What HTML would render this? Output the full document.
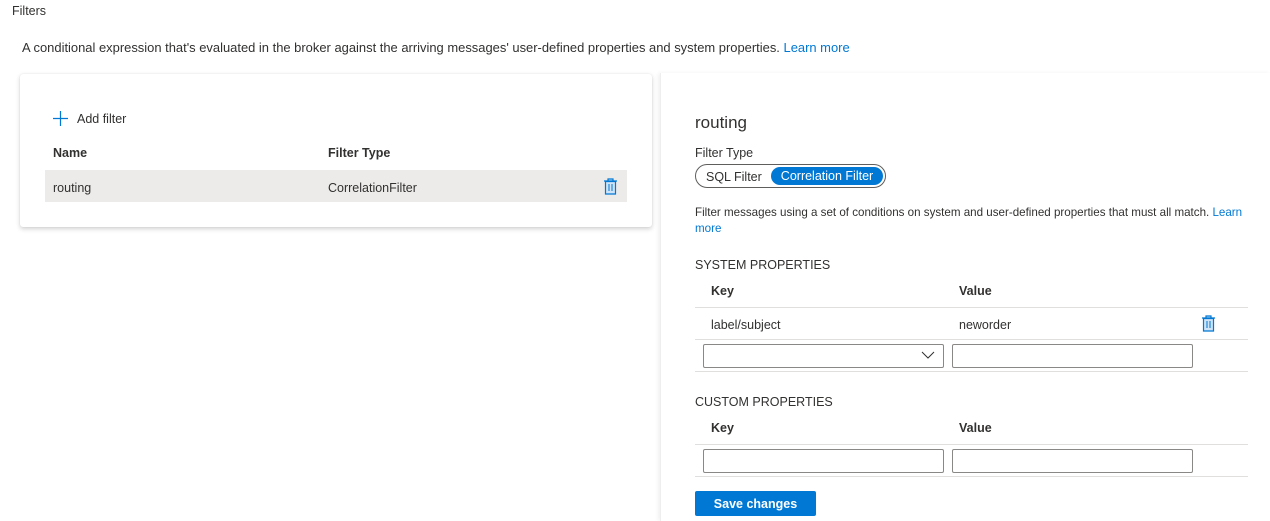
<!DOCTYPE html>
<html><head><style>
*{box-sizing:border-box;margin:0;padding:0}
body{width:1270px;height:521px;overflow:hidden;background:#fff;font-family:"Liberation Sans",sans-serif;font-size:12.5px;color:#323130;position:relative}
.a{position:absolute;white-space:nowrap}
.b{font-weight:bold}
.link{color:#0078d4}
.line{position:absolute;height:1px;background:#e1dfdd}
.inp{position:absolute;border:1px solid #8a8886;border-radius:2px;background:#fff;height:24px}
</style></head><body>
<div class="a" style="left:12px;top:4px">Filters</div>
<div class="a" style="left:22px;top:40px;font-size:12.95px">A conditional expression that's evaluated in the broker against the arriving messages' user-defined properties and system properties. <span class="link">Learn more</span></div>

<div class="a" style="left:20px;top:74px;width:632px;height:153px;background:#fff;border-radius:3px;box-shadow:0 1.6px 5px rgba(0,0,0,.18),0 0 1px rgba(0,0,0,.1)"></div>
<svg class="a" style="left:53px;top:111px" width="15" height="15"><path d="M7.5 0V15M0 7.5H15" stroke="#0078d4" stroke-width="1.2"/></svg>
<div class="a" style="left:77px;top:112px">Add filter</div>
<div class="a b" style="left:53px;top:146px">Name</div>
<div class="a b" style="left:328px;top:146px">Filter Type</div>
<div class="a" style="left:45px;top:170px;width:582px;height:32px;background:#edebe9"></div>
<div class="a" style="left:53px;top:181px">routing</div>
<div class="a" style="left:328px;top:181px">CorrelationFilter</div>
<svg class="a" style="left:603px;top:178px" width="15" height="17"><path d="M1 3H14M5 3V1H10V3M2.5 3.5H12.5V16H2.5Z" stroke="#0078d4" fill="#cfe4f7" stroke-width="1.2"/><path d="M6 6V13M9 6V13" stroke="#0078d4"/></svg>

<div class="a" style="left:660px;top:73px;width:610px;height:448px;background:#fff;box-shadow:-2px 0 4px rgba(0,0,0,.06);border-left:1px solid #eee"></div>
<div class="a" style="left:695px;top:113px;font-size:17px">routing</div>
<div class="a" style="left:695px;top:146px">Filter Type</div>
<div class="a" style="left:695px;top:164px;width:191px;height:24px;border:1px solid #605e5c;border-radius:12px"></div>
<div class="a" style="left:706px;top:170px">SQL Filter</div>
<div class="a" style="left:771px;top:167px;width:112px;height:18px;background:#0078d4;border-radius:9px;color:#fff;text-align:center;line-height:18px">Correlation Filter</div>
<div class="a" style="left:695px;top:206px;font-size:11.6px">Filter messages using a set of conditions on system and user-defined properties that must all match. <span class="link">Learn</span></div>
<div class="a link" style="left:695px;top:222px;font-size:11.6px">more</div>

<div class="a" style="left:695px;top:258px">SYSTEM PROPERTIES</div>
<div class="a b" style="left:711px;top:284px">Key</div>
<div class="a b" style="left:959px;top:284px">Value</div>
<div class="line" style="left:695px;top:307px;width:553px"></div>
<div class="a" style="left:711px;top:318px">label/subject</div>
<div class="a" style="left:959px;top:318px">neworder</div>
<svg class="a" style="left:1201px;top:315px" width="15" height="17"><path d="M1 3H14M5 3V1H10V3M2.5 3.5H12.5V16H2.5Z" stroke="#0078d4" fill="#cfe4f7" stroke-width="1.2"/><path d="M6 6V13M9 6V13" stroke="#0078d4"/></svg>
<div class="line" style="left:695px;top:339px;width:553px"></div>
<div class="inp" style="left:703px;top:344px;width:241px"></div>
<svg class="a" style="left:921px;top:351px" width="14" height="9"><path d="M1 1L7 7L13 1" stroke="#323130" fill="none"/></svg>
<div class="inp" style="left:952px;top:344px;width:241px"></div>
<div class="line" style="left:695px;top:371px;width:553px"></div>

<div class="a" style="left:695px;top:395px">CUSTOM PROPERTIES</div>
<div class="a b" style="left:711px;top:421px">Key</div>
<div class="a b" style="left:959px;top:421px">Value</div>
<div class="line" style="left:695px;top:444px;width:553px"></div>
<div class="inp" style="left:703px;top:449px;width:241px"></div>
<div class="inp" style="left:952px;top:449px;width:241px"></div>
<div class="line" style="left:695px;top:476px;width:553px"></div>
<div class="a b" style="left:695px;top:491px;width:121px;height:25px;background:#0078d4;color:#fff;border-radius:2px;text-align:center;line-height:26px">Save changes</div>
</body></html>
